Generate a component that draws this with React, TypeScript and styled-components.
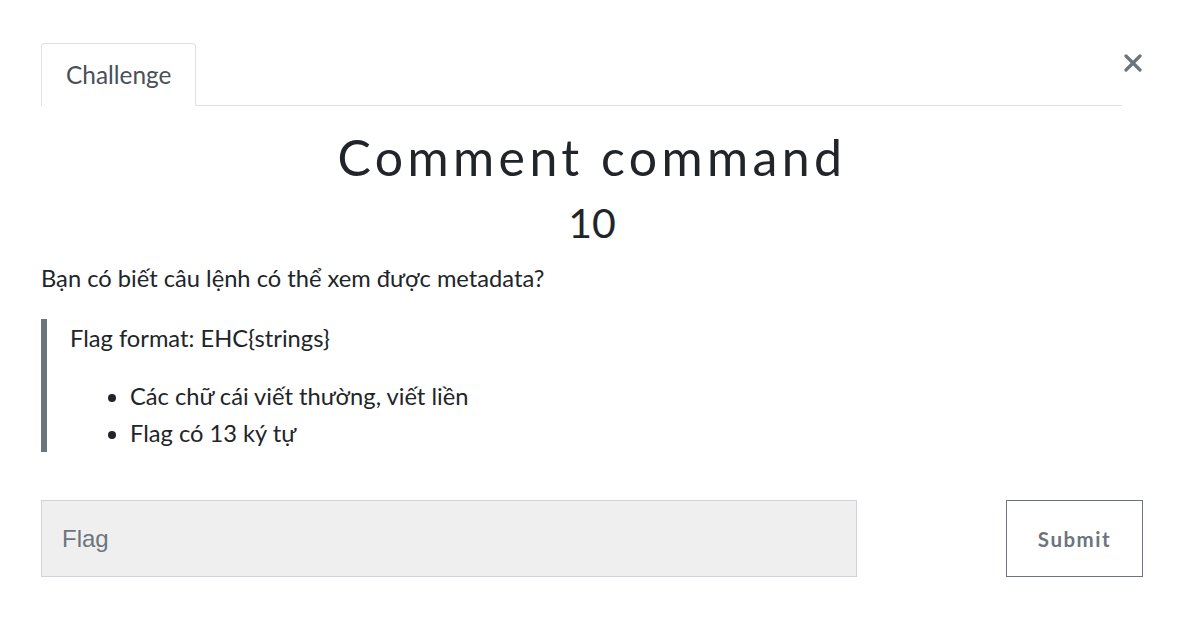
import React, { useState } from "react";
import styled, { createGlobalStyle } from "styled-components";

const GlobalStyle = createGlobalStyle`
  html, body {
    margin: 0;
    padding: 0;
    background: #fff;
  }
  body {
    font-family: Lato, "Noto Sans", sans-serif;
    color: #212529;
  }
`;

const Modal = styled.div`
  width: 1180px;
  height: 642px;
  box-sizing: border-box;
  padding: 43px 37px 0 41px;
  display: flex;
  flex-direction: column;
`;

const Header = styled.div`
  display: flex;
  align-items: flex-start;
`;

const Tabs = styled.ul`
  flex: 1;
  display: flex;
  list-style: none;
  margin: 0;
  padding: 0;
  border-bottom: 1px solid #dee2e6;
`;

const Tab = styled.li<{ $active?: boolean }>`
  margin-bottom: -1px;
  padding: 0 24px;
  height: 61px;
  display: flex;
  align-items: center;
  font-size: 24.4px;
  color: #495057;
  background: #fff;
  border: 1px solid ${(p) => (p.$active ? "#dee2e6" : "transparent")};
  border-bottom-color: ${(p) => (p.$active ? "#fff" : "transparent")};
  border-radius: 4px 4px 0 0;
`;

const Close = styled.button`
  border: none;
  background: none;
  padding: 0;
  margin: 8px 0 0 0;
  width: 21px;
  height: 24px;
  display: flex;
  align-items: center;
  justify-content: center;
  color: #6c757d;
  cursor: pointer;
`;

const Title = styled.h3`
  margin: 22px 0 0;
  text-align: center;
  font-family: Lato, "Noto Sans", sans-serif;
  font-weight: 400;
  font-size: 50px;
  line-height: 58px;
  letter-spacing: 4.4px;
  color: #212529;
`;

const Value = styled.h4`
  margin: 12px 0 0;
  text-align: center;
  font-weight: 400;
  font-size: 41px;
  line-height: 50px;
  color: #212529;
`;

const Description = styled.div`
  margin-top: 12px;
  font-size: 23.7px;
  line-height: 36px;
  margin-right: 21px;
  p {
    margin: 0 0 23px;
  }
`;

const Quote = styled.blockquote`
  margin: 0;
  padding: 1px 0 0 23px;
  border-left: 6px solid #6c757d;
  p {
    margin: 0 0 22px;
  }
  ul {
    margin: 0;
    padding-left: 60px;
    line-height: 37px;
  }
`;

const SubmitRow = styled.form`
  margin-top: 48px;
  display: flex;
  align-items: stretch;
  justify-content: space-between;
`;

const FlagInput = styled.input`
  width: 816px;
  height: 77px;
  box-sizing: border-box;
  padding: 0 20px;
  background: #efefef;
  border: 1px solid #ced4da;
  font-family: "Liberation Sans", Arial, sans-serif;
  font-size: 24px;
  color: #495057;
  outline: none;
  &::placeholder {
    color: #6c757d;
  }
`;

const SubmitButton = styled.button`
  width: 137px;
  height: 77px;
  box-sizing: border-box;
  background: #fff;
  border: 1px solid #6c757d;
  color: #6c757d;
  font-family: Lato, "Noto Sans", sans-serif;
  font-weight: 700;
  font-size: 20.5px;
  letter-spacing: 1.5px;
  cursor: pointer;
`;

export default function App() {
  const [flag, setFlag] = useState("");
  return (
    <>
      <GlobalStyle />
      <Modal>
        <Header>
          <Tabs>
            <Tab $active>Challenge</Tab>
          </Tabs>
          <Close aria-label="Close">
            <svg width="18" height="18" viewBox="0 0 18 18">
              <path
                d="M2 2 L16 16 M16 2 L2 16"
                stroke="currentColor"
                strokeWidth="3.2"
                strokeLinecap="round"
              />
            </svg>
          </Close>
        </Header>
        <Title>Comment command</Title>
        <Value>10</Value>
        <Description>
          <p>Bạn có biết câu lệnh có thể xem được metadata?</p>
          <Quote>
            <p>Flag format: EHC{"{strings}"}</p>
            <ul>
              <li>Các chữ cái viết thường, viết liền</li>
              <li>Flag có 13 ký tự</li>
            </ul>
          </Quote>
        </Description>
        <SubmitRow onSubmit={(e) => e.preventDefault()}>
          <FlagInput
            placeholder="Flag"
            value={flag}
            onChange={(e) => setFlag(e.target.value)}
          />
          <SubmitButton type="submit">Submit</SubmitButton>
        </SubmitRow>
      </Modal>
    </>
  );
}
